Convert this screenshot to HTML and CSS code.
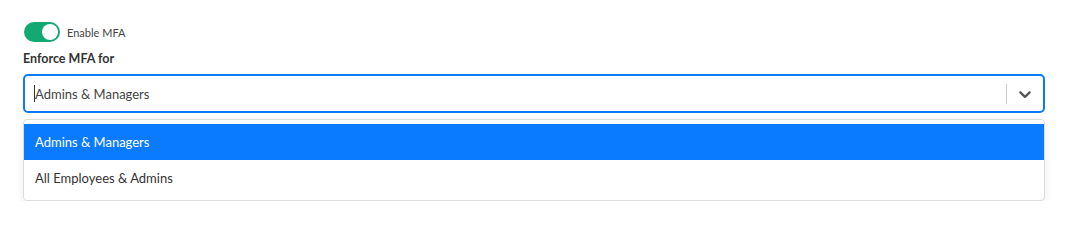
FILE: index.html
```html
<!DOCTYPE html>
<html>
<head>
<meta charset="utf-8">
<link rel="stylesheet" href="styles.css">
</head>
<body>
<div class="panel">
  <label class="toggle-row">
    <span class="toggle"><span class="knob"></span></span>
    <span class="toggle-label">Enable MFA</span>
  </label>
  <div class="field-label">Enforce MFA for</div>
  <div class="select">
    <div class="value"><span class="caret"></span>Admins &amp; Managers</div>
    <div class="indicators">
      <span class="sep"></span>
      <span class="chev">
        <svg width="20" height="20" viewBox="0 0 20 20"><path d="M4.516 7.548c0.436-0.446 1.043-0.481 1.576 0l3.908 3.747 3.908-3.747c0.533-0.481 1.141-0.446 1.574 0 0.436 0.445 0.408 1.197 0 1.615-0.406 0.418-4.695 4.502-4.695 4.502-0.217 0.223-0.502 0.335-0.787 0.335s-0.57-0.112-0.789-0.335c0 0-4.287-4.084-4.695-4.502s-0.436-1.170 0-1.615z" fill="#555"/></svg>
      </span>
    </div>
  </div>
  <div class="menu">
    <div class="option selected">Admins &amp; Managers</div>
    <div class="option">All Employees &amp; Admins</div>
  </div>
</div>
</body>
</html>
```
FILE: styles.css
```css
html, body {
  margin: 0;
  padding: 0;
  background: #fff;
}
body {
  font-family: "Lato", "Noto Sans", sans-serif;
  color: #333;
}
.panel {
  padding: 22px 23px 0 23px;
  display: flex;
  flex-direction: column;
}
.toggle-row {
  display: flex;
  align-items: center;
  gap: 7px;
  height: 20px;
  padding-left: 1px;
}
.toggle {
  width: 36px;
  height: 20px;
  border-radius: 10px;
  background: #14a873;
  display: flex;
  align-items: center;
  justify-content: flex-end;
  padding: 0 2px;
  box-sizing: border-box;
}
.knob {
  width: 16px;
  height: 16px;
  border-radius: 50%;
  background: #fff;
}
.toggle-label {
  font-size: 11px;
  color: #444;
}
.field-label {
  margin-top: 7px;
  font-size: 12.5px;
  font-weight: 700;
  color: #333;
  height: 20px;
  line-height: 20px;
}
.select {
  margin-top: 5px;
  height: 39px;
  border: 2px solid #0a7bff;
  border-radius: 5px;
  box-sizing: border-box;
  display: flex;
  align-items: center;
}
.value {
  flex: 1;
  padding-left: 9px;
  font-size: 13px;
  color: #444;
  display: flex;
  align-items: center;
}
.caret {
  width: 1px;
  height: 17px;
  background: #333;
}
.indicators {
  display: flex;
  align-items: center;
  height: 100%;
}
.sep {
  width: 1px;
  height: 20px;
  background: #ccc;
}
.chev {
  width: 36px;
  display: flex;
  justify-content: center;
  align-items: center;
}
.menu {
  margin-top: 6px;
  border: 1px solid #ddd;
  border-radius: 4px;
  padding: 4px 0;
  box-shadow: 0 2px 8px rgba(0,0,0,0.08);
  background: #fff;
}
.option {
  height: 36px;
  line-height: 36px;
  padding-left: 11px;
  font-size: 13px;
  color: #333;
}
.option.selected {
  background: #0a7bff;
  color: #fff;
}
```
